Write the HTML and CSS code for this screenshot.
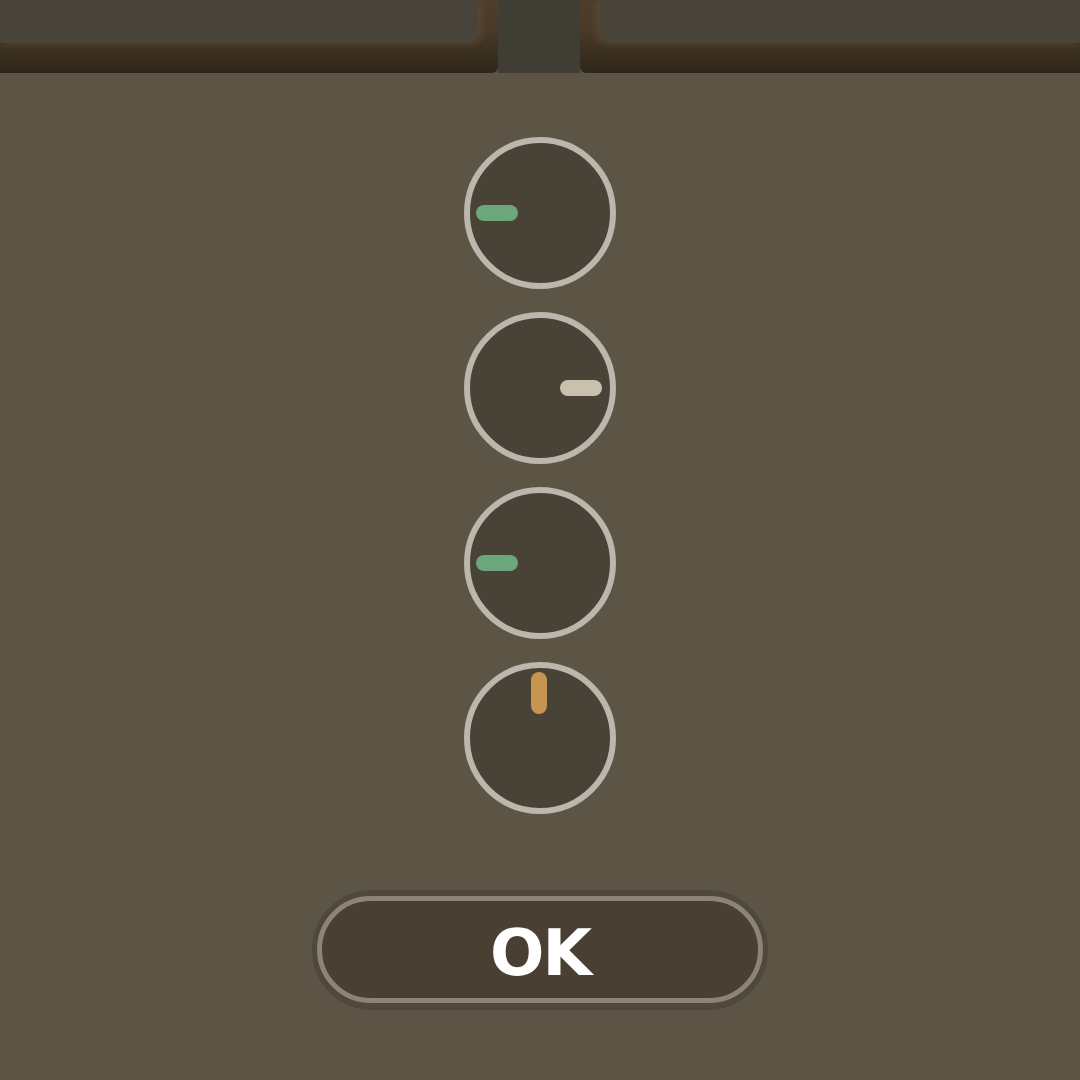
FILE: index.html
```html
<!DOCTYPE html>
<html>
<head>
<meta charset="utf-8">
<link rel="stylesheet" href="styles.css">
</head>
<body>
<div class="topbar">
  <div class="panel panel-left"><div class="face face-left"></div></div>
  <div class="gap"></div>
  <div class="panel panel-right"><div class="face face-right"></div></div>
</div>
<main class="content">
  <div class="knobs">
    <div class="knob"><span class="pill pill-left green"></span></div>
    <div class="knob"><span class="pill pill-right beige"></span></div>
    <div class="knob"><span class="pill pill-left green"></span></div>
    <div class="knob"><span class="pill pill-top orange"></span></div>
  </div>
  <div class="btn-wrap">
    <button class="ok-btn">OK</button>
  </div>
</main>
</body>
</html>
```
FILE: styles.css
```css
html, body {
  margin: 0;
  padding: 0;
}
body {
  width: 1080px;
  height: 1080px;
  background: #5c5545;
  overflow: hidden;
  font-family: "DejaVu Sans", "Liberation Sans", sans-serif;
}
.topbar {
  display: flex;
  height: 73px;
}
.panel {
  height: 73px;
  background: linear-gradient(180deg, #4e3e2c 0%, #4a3a29 40%, #2e2619 100%);
  display: flex;
}
.panel-left {
  width: 498px;
  border-bottom-right-radius: 6px;
  justify-content: flex-start;
}
.panel-right {
  flex: 1;
  border-bottom-left-radius: 6px;
  justify-content: flex-end;
}
.face {
  height: 43px;
  background: #48443a;
}
.face-left {
  width: 478px;
  border-bottom-right-radius: 12px;
  box-shadow: 4px 2px 6px rgba(110, 95, 70, 0.35);
}
.face-right {
  width: 480px;
  border-bottom-left-radius: 12px;
  box-shadow: -4px 2px 6px rgba(110, 95, 70, 0.35);
}
.gap {
  width: 82px;
  background: #403d34;
}
.content {
  display: flex;
  flex-direction: column;
  align-items: center;
  padding-top: 64px;
}
.knobs {
  display: flex;
  flex-direction: column;
  gap: 23px;
}
.knob {
  position: relative;
  width: 152px;
  height: 152px;
  box-sizing: border-box;
  border: 6px solid #bcb6ac;
  border-radius: 50%;
  background: #494236;
}
.pill {
  position: absolute;
  border-radius: 8px;
}
.pill-left {
  width: 42px;
  height: 16px;
  left: 6px;
  top: 62px;
}
.pill-right {
  width: 42px;
  height: 16px;
  right: 8px;
  top: 62px;
}
.pill-top {
  width: 16px;
  height: 42px;
  top: 4px;
  left: 61px;
}
.green { background: #6ba77b; }
.beige { background: #c9c0ae; }
.orange { background: #c6954f; }
.btn-wrap {
  margin-top: 76px;
  width: 456px;
  height: 120px;
  box-sizing: border-box;
  padding: 6px 5px 7px;
  border-radius: 60px;
  background: #4f483b;
}
.ok-btn {
  width: 100%;
  height: 100%;
  box-sizing: border-box;
  border: 5px solid #8b8477;
  border-radius: 54px;
  background: #493f33;
  color: #ffffff;
  font-family: "DejaVu Sans", sans-serif;
  font-weight: bold;
  font-size: 64px;
  line-height: 1;
  padding: 6px 0 0 0;
  display: flex;
  align-items: center;
  justify-content: center;
  letter-spacing: -2px;
}
```
